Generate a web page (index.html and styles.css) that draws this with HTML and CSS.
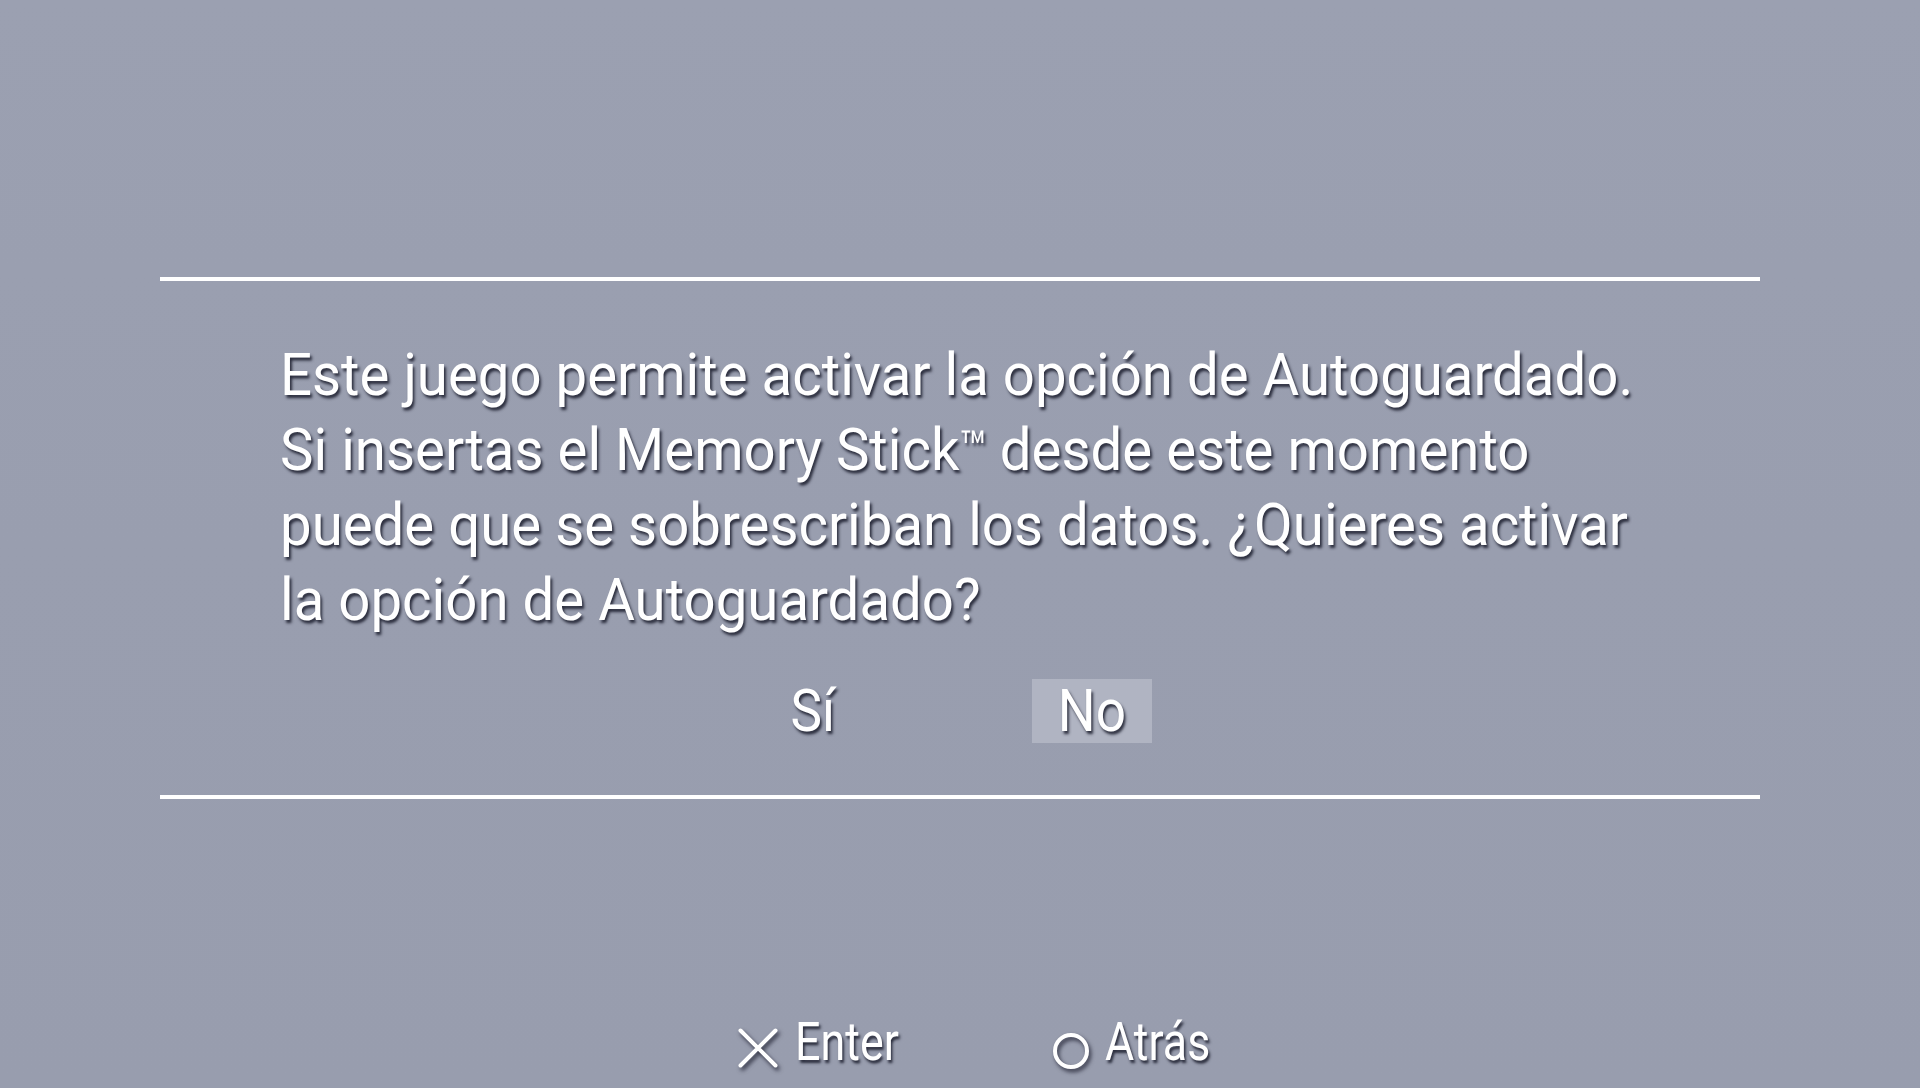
FILE: index.html
```html
<!DOCTYPE html>
<html lang="es">
<head>
<meta charset="utf-8">
<title>Autoguardado</title>
<link rel="stylesheet" href="styles.css">
</head>
<body>
<div class="screen">
  <div class="dialog">
    <div class="rule"></div>
    <div class="msg">
      <div class="line">Este juego permite activar la opción de Autoguardado.</div>
      <div class="line">Si insertas el Memory Stick<span class="tm">™</span> desde este momento</div>
      <div class="line">puede que se sobrescriban los datos. ¿Quieres activar</div>
      <div class="line">la opción de Autoguardado?</div>
    </div>
    <div class="options">
      <div class="opt"><span class="otxt">Sí</span></div>
      <div class="opt sel"><span class="otxt">No</span></div>
    </div>
    <div class="rule"></div>
  </div>
  <div class="footer">
    <div class="hint">
      <svg class="ico ico-x" width="40" height="40" viewBox="0 0 40 40"><path d="M2.5 2.5 L37.5 37.5 M37.5 2.5 L2.5 37.5" stroke="#fff" stroke-width="4" stroke-linecap="round" fill="none"/></svg>
      <span class="lbl lbl-enter">Enter</span>
    </div>
    <div class="hint">
      <svg class="ico ico-o" width="38" height="38" viewBox="0 0 38 38"><circle cx="19" cy="19" r="16" stroke="#fff" stroke-width="4" fill="none"/></svg>
      <span class="lbl lbl-back">Atrás</span>
    </div>
  </div>
</div>
</body>
</html>
```
FILE: styles.css
```css
html, body {
  margin: 0;
  padding: 0;
}
body {
  width: 1920px;
  height: 1088px;
  overflow: hidden;
  background: linear-gradient(180deg, #9ba0b1 0%, #999eaf 50%, #989dae 100%);
  font-family: Roboto, "Liberation Sans", sans-serif;
  color: #fff;
}
.screen {
  height: 1088px;
  display: flex;
  flex-direction: column;
}
.dialog {
  padding-top: 277px;
}
.rule {
  height: 4px;
  margin: 0 160px;
  background: #fff;
}
.msg {
  margin-top: 56px;
  margin-left: 280px;
  font-size: 59px;
  line-height: 75px;
  transform: scaleX(0.955);
  transform-origin: 0 0;
  white-space: nowrap;
  text-shadow: 2px 3px 3px rgba(30, 32, 48, 0.9);
}
.line {
  height: 75px;
}
.tm {
  font-size: 0.8em;
  line-height: 0;
  vertical-align: 6px;
  margin-right: -2px;
}
.options {
  display: flex;
  margin: 42px 0 52px 753px;
  gap: 159px;
  font-size: 59px;
  line-height: 64px;
  text-shadow: 2px 3px 3px rgba(30, 32, 48, 0.9);
}
.opt {
  width: 120px;
  height: 64px;
  text-align: center;
}
.otxt {
  display: inline-block;
  transform: scaleX(0.9);
}
.opt.sel {
  background: #b0b4c2;
}
.footer {
  margin-top: auto;
  margin-bottom: 16px;
  padding-left: 738px;
  display: flex;
  gap: 157px;
  font-size: 54px;
  line-height: 60px;
  height: 60px;
  text-shadow: 2px 3px 3px rgba(30, 32, 48, 0.9);
}
.hint {
  display: flex;
  align-items: flex-start;
}
.ico {
  filter: drop-shadow(2px 3px 2px rgba(30, 32, 48, 0.85));
}
.ico-x {
  margin-top: 16px;
  margin-right: 17px;
}
.ico-o {
  margin-top: 20px;
  margin-right: 15px;
}
.lbl {
  display: inline-block;
  transform: scaleX(0.83);
  transform-origin: 0 0;
}
.lbl-enter {
  width: 100px;
}
.lbl-back {
  width: 109px;
}
```
